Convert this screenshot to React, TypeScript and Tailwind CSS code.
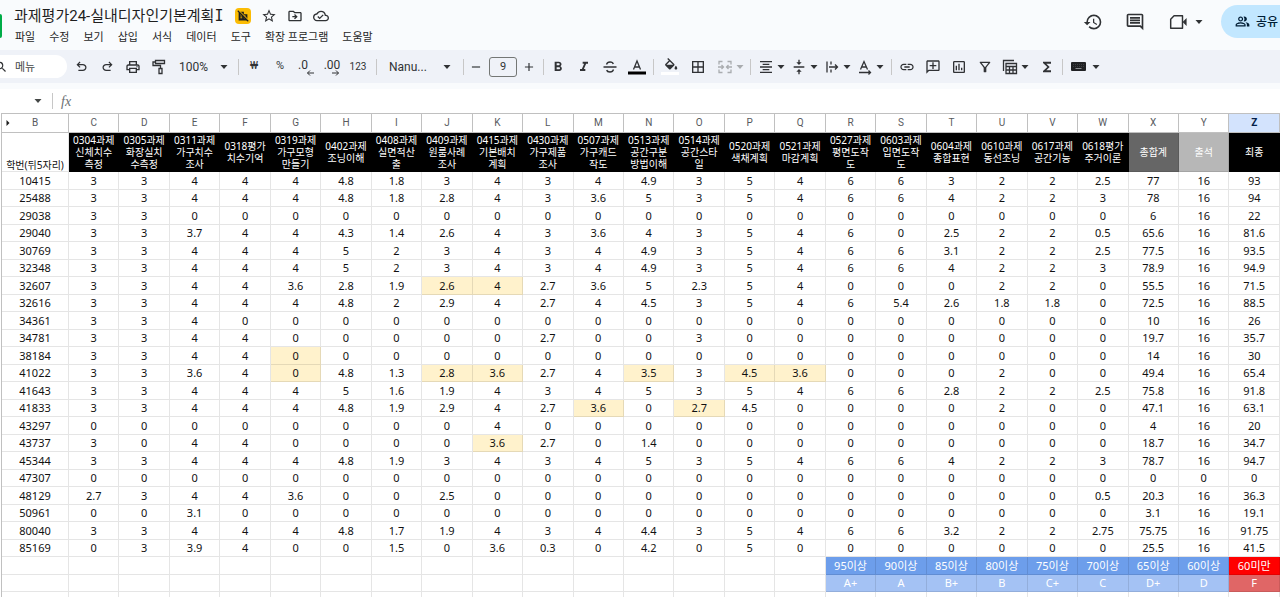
import type { ReactNode } from "react";
import {
  MdAdd,
  MdBorderAll,
  MdFormatAlignCenter,
  MdFormatBold,
  MdFormatItalic,
  MdFunctions,
  MdHistory,
  MdLink,
  MdOutlineAddComment,
  MdOutlineCloudDone,
  MdOutlineComment,
  MdOutlineDriveFileMove,
  MdOutlineFilterAlt,
  MdOutlineInsertChart,
  MdOutlinePeopleAlt,
  MdOutlinePrint,
  MdRemove,
  MdSearch,
  MdStarBorder,
  MdVerticalAlignCenter,
} from "react-icons/md";
import { clsx } from "clsx";

const menus = ["파일", "수정", "보기", "삽입", "서식", "데이터", "도구", "확장 프로그램", "도움말"];

const columns = [
  { letter: "C", lines: ["0304과제", "신체치수", "측정"] },
  { letter: "D", lines: ["0305과제", "화장실치", "수측정"] },
  { letter: "E", lines: ["0311과제", "가구치수", "조사"] },
  { letter: "F", lines: ["0318평가", "치수기억"] },
  { letter: "G", lines: ["0319과제", "가구모형", "만들기"] },
  { letter: "H", lines: ["0402과제", "조닝이해"] },
  { letter: "I", lines: ["0408과제", "실면적산", "출"] },
  { letter: "J", lines: ["0409과제", "원룸사례", "조사"] },
  { letter: "K", lines: ["0415과제", "기본배치", "계획"] },
  { letter: "L", lines: ["0430과제", "가구제품", "조사"] },
  { letter: "M", lines: ["0507과제", "가구캐드", "작도"] },
  { letter: "N", lines: ["0513과제", "공간구분", "방법이해"] },
  { letter: "O", lines: ["0514과제", "공간스타", "일"] },
  { letter: "P", lines: ["0520과제", "색채계획"] },
  { letter: "Q", lines: ["0521과제", "마감계획"] },
  { letter: "R", lines: ["0527과제", "평면도작", "도"] },
  { letter: "S", lines: ["0603과제", "입면도작", "도"] },
  { letter: "T", lines: ["0604과제", "종합표현"] },
  { letter: "U", lines: ["0610과제", "동선조닝"] },
  { letter: "V", lines: ["0617과제", "공간기능"] },
  { letter: "W", lines: ["0618평가", "주거이론"] },
  { letter: "X", lines: ["총합계"] },
  { letter: "Y", lines: ["출석"] },
  { letter: "Z", lines: ["최종"] },
];

// 학번 followed by the scores in columns C..Z
const rows = [
  "10415 3 3 4 4 4 4.8 1.8 3 4 3 4 4.9 3 5 4 6 6 3 2 2 2.5 77 16 93",
  "25488 3 3 4 4 4 4.8 1.8 2.8 4 3 3.6 5 3 5 4 6 6 4 2 2 3 78 16 94",
  "29038 3 3 0 0 0 0 0 0 0 0 0 0 0 0 0 0 0 0 0 0 0 6 16 22",
  "29040 3 3 3.7 4 4 4.3 1.4 2.6 4 3 3.6 4 3 5 4 6 0 2.5 2 2 0.5 65.6 16 81.6",
  "30769 3 3 4 4 4 5 2 3 4 3 4 4.9 3 5 4 6 6 3.1 2 2 2.5 77.5 16 93.5",
  "32348 3 3 4 4 4 5 2 3 4 3 4 4.9 3 5 4 6 6 4 2 2 3 78.9 16 94.9",
  "32607 3 3 4 4 3.6 2.8 1.9 2.6 4 2.7 3.6 5 2.3 5 4 0 0 0 2 2 0 55.5 16 71.5",
  "32616 3 3 4 4 4 4.8 2 2.9 4 2.7 4 4.5 3 5 4 6 5.4 2.6 1.8 1.8 0 72.5 16 88.5",
  "34361 3 3 4 0 0 0 0 0 0 0 0 0 0 0 0 0 0 0 0 0 0 10 16 26",
  "34781 3 3 4 4 0 0 0 0 0 2.7 0 0 3 0 0 0 0 0 0 0 0 19.7 16 35.7",
  "38184 3 3 4 4 0 0 0 0 0 0 0 0 0 0 0 0 0 0 0 0 0 14 16 30",
  "41022 3 3 3.6 4 0 4.8 1.3 2.8 3.6 2.7 4 3.5 3 4.5 3.6 0 0 0 2 0 0 49.4 16 65.4",
  "41643 3 3 4 4 4 5 1.6 1.9 4 3 4 5 3 5 4 6 6 2.8 2 2 2.5 75.8 16 91.8",
  "41833 3 3 4 4 4 4.8 1.9 2.9 4 2.7 3.6 0 2.7 4.5 0 0 0 0 2 0 0 47.1 16 63.1",
  "43297 0 0 0 0 0 0 0 0 4 0 0 0 0 0 0 0 0 0 0 0 0 4 16 20",
  "43737 3 0 4 4 0 0 0 0 3.6 2.7 0 1.4 0 0 0 0 0 0 0 0 0 18.7 16 34.7",
  "45344 3 3 4 4 4 4.8 1.9 3 4 3 4 5 3 5 4 6 6 4 2 2 3 78.7 16 94.7",
  "47307 0 0 0 0 0 0 0 0 0 0 0 0 0 0 0 0 0 0 0 0 0 0 0 0",
  "48129 2.7 3 4 4 3.6 0 0 2.5 0 0 0 0 0 0 0 0 0 0 0 0 0.5 20.3 16 36.3",
  "50961 0 0 3.1 0 0 0 0 0 0 0 0 0 0 0 0 0 0 0 0 0 0 3.1 16 19.1",
  "80040 3 3 4 4 4 4.8 1.7 1.9 4 3 4 4.4 3 5 4 6 6 3.2 2 2 2.75 75.75 16 91.75",
  "85169 0 3 3.9 4 0 0 1.5 0 3.6 0.3 0 4.2 0 5 0 0 0 0 0 0 0 25.5 16 41.5",
].map((row) => row.split(" "));

const highlighted: Record<string, string> = {
  "32607": "JK",
  "38184": "G",
  "41022": "GJKNPQ",
  "41833": "MO",
  "43737": "K",
};

const cutoffs = ["95이상", "90이상", "85이상", "80이상", "75이상", "70이상", "65이상", "60이상", "60미만"];
const grades = ["A+", "A", "B+", "B", "C+", "C", "D+", "D", "F"];

const gridLine = "border-r border-b border-black/10 p-0";

const Caret = () => (
  <svg viewBox="0 0 8 4" className="h-1 w-2 shrink-0 fill-current">
    <path d="M0.5 0h7L4 4z" />
  </svg>
);

const Divider = ({ className }: { className: string }) => (
  <div className={clsx("h-4 w-px shrink-0 bg-[#c7c7c7]", className)} />
);

const Tool = ({ label, children, className = "w-[26px]" }: { label: string; children: ReactNode; className?: string }) => (
  <button type="button" aria-label={label} className={clsx("flex h-6 shrink-0 items-center justify-center", className)}>
    {children}
  </button>
);

const MenuTool = ({ label, children, className }: { label: string; children: ReactNode; className?: string }) => (
  <button type="button" aria-label={label} className={clsx("flex h-6 w-[33px] shrink-0 items-center gap-0.5", className)}>
    <span className="flex w-[18px] justify-center">{children}</span>
    <Caret />
  </button>
);

const UndoIcon = ({ flip = false }: { flip?: boolean }) => (
  <svg viewBox="0 -960 960 960" className={clsx("size-[15px] fill-current", flip && "-scale-x-100")}>
    <path d="M280-200v-80h284q63 0 109.500-40T720-420q0-60-46.500-100T564-560H312l104 104-56 56-200-200 200-200 56 56-104 104h252q97 0 166.500 63T800-420q0 94-69.500 157T564-200H280Z" />
  </svg>
);

const Stroke = ({ children, className = "size-4" }: { children: ReactNode; className?: string }) => (
  <svg viewBox="0 0 16 16" className={className} fill="none" stroke="currentColor" strokeWidth="1.3">
    {children}
  </svg>
);

const Header = () => (
  <header className="flex h-[50px] items-start">
    <div className="mt-3.5 h-6 w-0.5 rounded-r-sm bg-[#00ac47]" />
    <div className="ml-3 pt-1">
      <div className="flex h-6 items-center">
        <h1 className="text-[15px] leading-6 whitespace-nowrap text-[#1f1f1f]">
          과제평가24-실내디자인기본계획<span className="font-['DejaVu_Sans_Mono',monospace]">I</span>
        </h1>
        <div className="ml-3 flex items-center gap-2.5">
          <span className="flex size-4 items-center justify-center rounded-sm bg-[#fbbc04]">
            <svg viewBox="0 0 16 16" className="size-3.5">
              <path d="M4 3h5v3h4v7H3V4z" fill="#1f1f1f" />
              <path d="M5 6h2M5 8h2M5 10h2M9 8h2M9 10h2" stroke="#fbbc04" strokeWidth="1" />
              <path d="M3 1.500l12 12" stroke="#fbbc04" strokeWidth="1.2" />
              <path d="M2 2l12 12" stroke="#1f1f1f" strokeWidth="1.3" />
            </svg>
          </span>
          <button type="button" aria-label="별표"><MdStarBorder className="size-4" /></button>
          <button type="button" aria-label="이동"><MdOutlineDriveFileMove className="size-4" /></button>
          <button type="button" aria-label="문서 상태"><MdOutlineCloudDone className="size-4" /></button>
        </div>
      </div>
      <nav className="mt-0.5 ml-px flex h-4 items-center gap-3.5">
        {menus.map((menu) => (
          <button key={menu} type="button" className="text-[11px] leading-4 whitespace-nowrap text-[#1f1f1f]">
            {menu}
          </button>
        ))}
      </nav>
    </div>
    <div className="ml-auto flex items-center pt-[5px]">
      <button type="button" aria-label="업데이트 기록" className="mr-[22px]"><MdHistory className="size-5" /></button>
      <button type="button" aria-label="댓글" className="mr-6"><MdOutlineComment className="size-5" /></button>
      <button type="button" aria-label="화상 통화" className="mr-[18px] flex items-center gap-2">
        <Stroke className="size-[18px]">
          <path d="M4.500 2.500h7.500v11H1.500v-8z" strokeLinejoin="round" />
          <path d="M13 8l2-2v4z" fill="currentColor" />
        </Stroke>
        <Caret />
      </button>
      <button type="button" className="flex h-[33px] items-center gap-1.5 rounded-l-full bg-[#c2e7ff] pr-0.5 pl-3.5 text-[#001d35]">
        <MdOutlinePeopleAlt className="size-[15px]" />
        <span className="text-[12px] font-medium">공유</span>
      </button>
    </div>
  </header>
);

const Toolbar = () => (
  <div className="flex h-[33px] items-center overflow-hidden bg-[#eff2f8] text-[#303235]">
    <label className="-ml-5 flex h-[23px] w-[87px] shrink-0 items-center rounded-full bg-white pl-3.5">
      <MdSearch className="size-3.5 shrink-0" />
      <input
        type="text"
        aria-label="메뉴 검색"
        placeholder="메뉴"
        className="ml-[7px] h-5 w-9 pt-0.5 text-[11px] outline-none placeholder:text-[#444746]"
      />
    </label>
    <Tool label="실행취소" className="ml-px w-[26px]"><UndoIcon /></Tool>
    <Tool label="재실행"><UndoIcon flip /></Tool>
    <Tool label="인쇄"><MdOutlinePrint className="size-4" /></Tool>
    <Tool label="서식 복사">
      <Stroke>
        <path d="M4.500 1.500h9v3h-9zM4.500 3h-2.500v3.500h7.500v3M8 9.500h3v5h-3z" />
      </Stroke>
    </Tool>
    <label className="ml-[7px] flex items-center">
      <select aria-label="확대/축소" className="w-[41px] appearance-none font-[Roboto] text-[12px]">
        <option>100%</option>
      </select>
      <Caret />
    </label>
    <Divider className="mr-0.5 ml-2.5" />
    <Tool label="통화 형식"><span className="text-[11px]">₩</span></Tool>
    <Tool label="퍼센트 형식"><span className="font-[Roboto] text-[11px]">%</span></Tool>
    <Tool label="소수점 이하 자릿수 감소" className="w-[26px] pr-1.5">
      <span className="relative -mt-1 font-[Roboto] text-[12px]">
        .0
        <svg viewBox="0 0 8 6" className="absolute -right-1.5 -bottom-0.5 h-1.5 w-2" fill="none" stroke="currentColor">
          <path d="M8 3H1.500M4 0.500L1.500 3L4 5.500" />
        </svg>
      </span>
    </Tool>
    <Tool label="소수점 이하 자릿수 증가">
      <span className="relative -mt-1 font-[Roboto] text-[12px]">
        .00
        <svg viewBox="0 0 8 6" className="absolute right-0 -bottom-0.5 h-1.5 w-2" fill="none" stroke="currentColor">
          <path d="M0 3h6.500M4 0.500L6.500 3L4 5.500" />
        </svg>
      </span>
    </Tool>
    <Tool label="서식 더보기"><span className="font-[Roboto] text-[10px]">123</span></Tool>
    <Divider className="mr-3 ml-[5px]" />
    <label className="flex items-center">
      <select aria-label="글꼴" className="w-[54px] appearance-none font-[Roboto] text-[12px]">
        <option>Nanu...</option>
      </select>
      <Caret />
    </label>
    <Divider className="ml-3" />
    <Tool label="글꼴 크기 줄이기" className="w-6"><MdRemove className="size-3.5" /></Tool>
    <input
      type="text"
      aria-label="글꼴 크기"
      defaultValue="9"
      className="ml-px h-5 w-7 shrink-0 rounded-[3px] border border-[#747775] text-center font-[Roboto] text-[11px]"
    />
    <Tool label="글꼴 크기 늘리기" className="w-6"><MdAdd className="size-3.5" /></Tool>
    <Divider className="mr-px ml-0.5" />
    <Tool label="굵게"><MdFormatBold className="size-4" /></Tool>
    <Tool label="기울임꼴"><MdFormatItalic className="size-4" /></Tool>
    <Tool label="취소선">
      <Stroke>
        <path d="M1.500 8h13M4.500 5.500C5 3.500 6.500 3 8 3s3 0.700 3.300 2M11.500 10.500c-0.500 2-2 2.500-3.500 2.500s-3-0.700-3.300-2" />
      </Stroke>
    </Tool>
    <Tool label="텍스트 색상" className="w-7">
      <svg viewBox="0 0 18 16" className="h-4 w-[18px]">
        <path d="M5.500 10.500L9 2l3.500 8.500M6.500 8h5" fill="none" stroke="currentColor" strokeWidth="1.300" />
        <path d="M0 12.500h18v3H0z" fill="#000" />
      </svg>
    </Tool>
    <Divider className="mx-0.5" />
    <Tool label="채우기 색상" className="w-7">
      <svg viewBox="0 0 18 18" className="size-[18px]">
        <g transform="translate(2 0) scale(0.68)" fill="currentColor">
          <path d="M16.560 8.940L7.620 0 6.210 1.410l2.380 2.380-5.150 5.150c-.59.59-.59 1.540 0 2.120l5.500 5.500c.29.29.68.44 1.060.44s.77-.15 1.060-.44l5.500-5.500c.59-.58.59-1.530 0-2.120zM5.210 10L10 5.210 14.790 10H5.210zM19 11.500s-2 2.170-2 3.500c0 1.100.9 2 2 2s2-.9 2-2c0-1.330-2-3.500-2-3.500z" />
        </g>
        <path d="M0 14h18v3H0z" fill="#fff" />
      </svg>
    </Tool>
    <Tool label="테두리" className="w-7"><MdBorderAll className="size-4" /></Tool>
    <MenuTool label="셀 병합" className="ml-1 text-[#a9acaf]">
      <Stroke>
        <path d="M5.500 2.500H2v3M10.500 2.500H14v3M5.500 13.500H2v-3M10.500 13.500H14v-3M1 8h5M4.500 6L6.500 8L4.500 10M15 8h-5M11.500 6L9.500 8L11.500 10" />
      </Stroke>
    </MenuTool>
    <Divider className="mr-1.5 ml-px" />
    <MenuTool label="가로 맞춤"><MdFormatAlignCenter className="size-4" /></MenuTool>
    <MenuTool label="세로 맞춤"><MdVerticalAlignCenter className="size-4" /></MenuTool>
    <MenuTool label="텍스트 줄바꿈">
      <Stroke>
        <path d="M3 2.500v11M7 2.500v3M7 10.500v3M5 8h8.500M11 5.500L13.500 8L11 10.500" />
      </Stroke>
    </MenuTool>
    <MenuTool label="텍스트 회전">
      <Stroke>
        <path d="M3.500 10.500L7 2.500l3.500 8M4.500 8h5M2 13.500h11.500M11.500 11.500l2 2l-2 2" />
      </Stroke>
    </MenuTool>
    <Divider className="mx-0.5" />
    <Tool label="링크 삽입"><MdLink className="size-4" /></Tool>
    <Tool label="댓글 삽입"><MdOutlineAddComment className="size-4 -scale-x-100" /></Tool>
    <Tool label="차트 삽입"><MdOutlineInsertChart className="size-4" /></Tool>
    <Tool label="필터 만들기"><MdOutlineFilterAlt className="size-4" /></Tool>
    <MenuTool label="필터 보기" className="ml-[3px]">
      <Stroke>
        <path d="M1.500 12V1.500H12M4 4.500h10.500v10H4zM4 7.500h10.500M4 11h10.500M7.500 7.500v7M11 7.500v7" />
      </Stroke>
    </MenuTool>
    <Tool label="함수"><MdFunctions className="size-4" /></Tool>
    <Divider className="mr-2 ml-0.5" />
    <button type="button" aria-label="입력 도구" className="flex h-6 shrink-0 items-center gap-1.5">
      <svg viewBox="0 0 15 9" className="h-[9px] w-[15px]">
        <rect width="15" height="9" rx="1" fill="#202124" />
        <path d="M2 2.500h11M2 4.500h11" stroke="#3c3f43" strokeDasharray="1 1" />
        <path d="M4.500 6.500h6" stroke="#8a8d91" />
      </svg>
      <Caret />
    </button>
  </div>
);

const FormulaBar = () => (
  <div className="mt-1.5 flex h-6 items-center bg-white text-[#444746]">
    <button type="button" aria-label="이름 상자" className="ml-[34px] flex h-4 items-center">
      <Caret />
    </button>
    <Divider className="ml-2.5" />
    <label htmlFor="formula" className="ml-2 font-['Liberation_Serif'] text-[14px] text-[#6b6f73] italic">
      fx
    </label>
    <input id="formula" type="text" aria-label="수식 입력" className="ml-2 min-w-0 flex-1 text-[12px] outline-none" />
  </div>
);

const Sheet = () => (
  <table className="w-full table-fixed border-separate border-spacing-0 border-t border-l border-[#c0c0c0] font-['Noto_Sans','Noto_Sans_CJK_KR',sans-serif] text-[11px] leading-3 text-[#111]">
    <colgroup>
      <col className="w-[67px]" />
      {columns.map((column) => (
        <col key={column.letter} />
      ))}
    </colgroup>
    <thead className="text-[10px]">
      <tr className="h-[19px] font-[Roboto] text-[#575a5e]">
        <th className="relative border-r border-b border-[#c0c0c0] p-0 font-normal">
          <svg viewBox="0 0 4 6" className="absolute top-1.5 left-1 h-1.5 w-1 fill-[#1f1f1f]">
            <path d="M0.500 0L3.500 3L0.500 6z" />
          </svg>
          B
        </th>
        {columns.map(({ letter }) => (
          <th
            key={letter}
            className={clsx(
              "border-r border-b border-[#c0c0c0] p-0",
              letter === "Z" ? "bg-[#d3e3fd] font-bold text-[#041e49]" : "font-normal"
            )}
          >
            {letter}
          </th>
        ))}
      </tr>
      <tr className="h-[39px]">
        <th className={clsx(gridLine, "align-bottom font-normal whitespace-nowrap")}>학번(뒤5자리)</th>
        {columns.map(({ letter, lines }) => (
          <th
            key={letter}
            className={clsx(
              gridLine,
              "font-normal whitespace-nowrap text-white",
              letter === "X" ? "bg-[#666666]" : letter === "Y" ? "bg-[#b7b7b7]" : "bg-black"
            )}
          >
            {lines.map((line) => (
              <div key={line}>{line}</div>
            ))}
          </th>
        ))}
      </tr>
    </thead>
    <tbody className="text-center">
      {rows.map(([id, ...scores]) => (
        <tr key={id} className="odd:h-[18px] even:h-[17px]">
          <td className={gridLine}>{id}</td>
          {scores.map((score, i) => (
            <td
              key={columns[i].letter}
              className={clsx(gridLine, highlighted[id]?.includes(columns[i].letter) && "bg-[#fff2cc]")}
            >
              {score}
            </td>
          ))}
        </tr>
      ))}
      {[cutoffs, grades].map((labels, r) => (
        <tr key={r} className="odd:h-[18px] even:h-[17px]">
          {Array.from({ length: 16 }, (_, i) => (
            <td key={i} className={gridLine} />
          ))}
          {labels.map((label, i) => (
            <td
              key={label}
              className={clsx(
                gridLine,
                "whitespace-nowrap text-white",
                i === 8 ? (r === 0 ? "bg-[#ff0000]" : "bg-[#e06666]") : r === 0 ? "bg-[#6d9eeb]" : "bg-[#a4c2f4]"
              )}
            >
              {label}
            </td>
          ))}
        </tr>
      ))}
      <tr className="h-[18px]">
        {Array.from({ length: 25 }, (_, i) => (
          <td key={i} className={gridLine} />
        ))}
      </tr>
    </tbody>
  </table>
);

export default function App() {
  return (
    <div className="flex h-screen flex-col overflow-hidden bg-[#f9fbfd] font-['Roboto','Noto_Sans_CJK_KR',sans-serif] text-[#303235]">
      <Header />
      <Toolbar />
      <FormulaBar />
      <main className="min-h-0 flex-1 overflow-hidden bg-white pl-px">
        <Sheet />
      </main>
    </div>
  );
}
